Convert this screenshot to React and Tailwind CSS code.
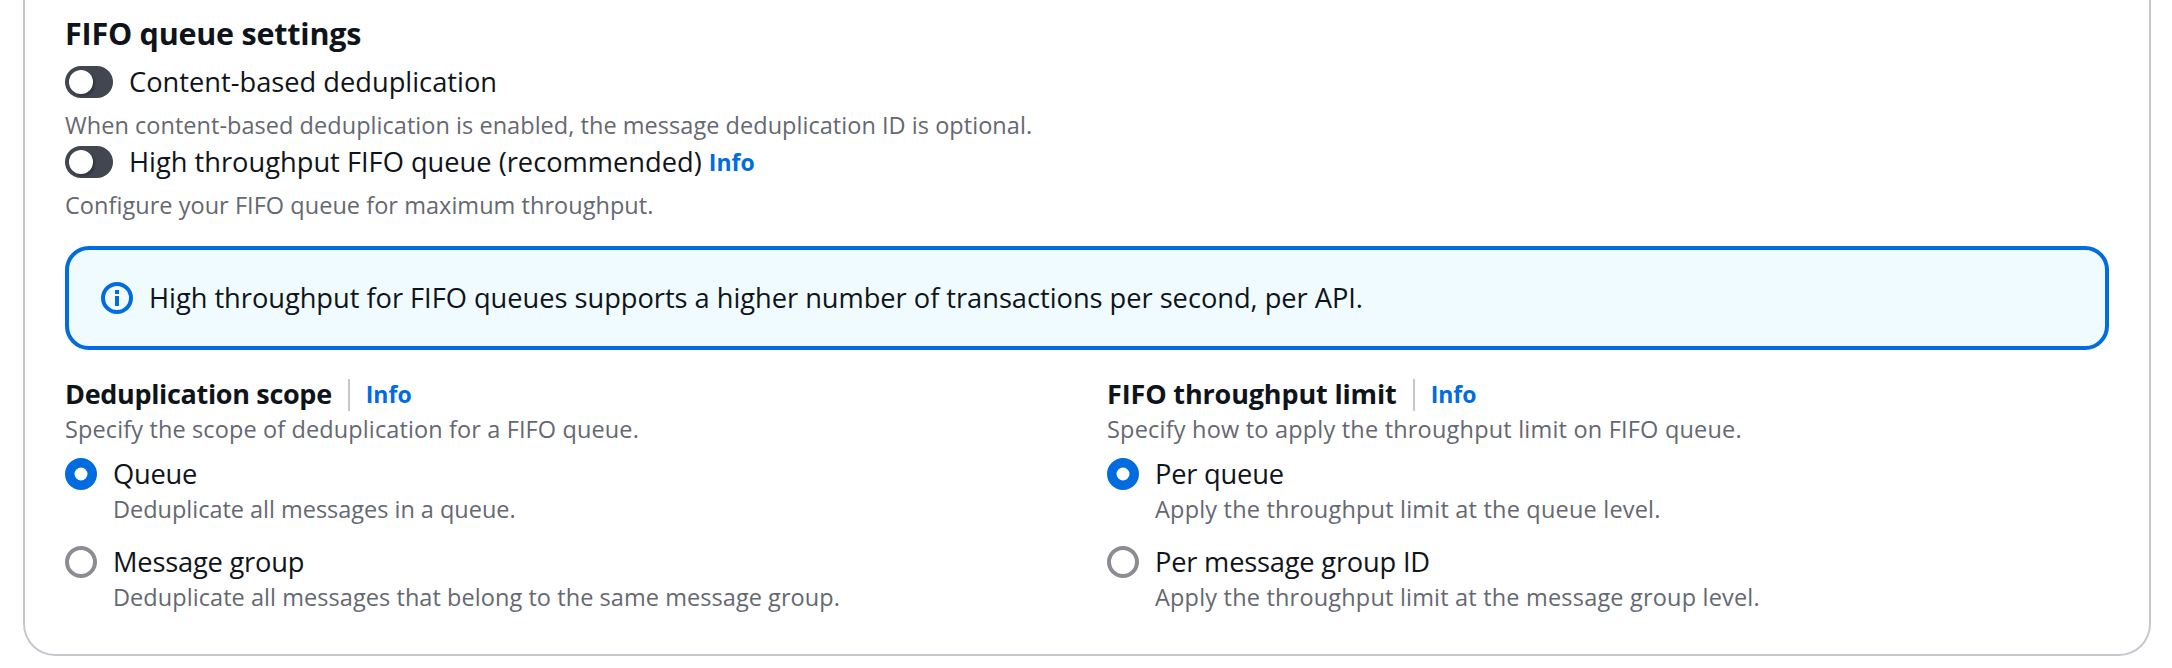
function InfoLink({ className = "" }) {
  return (
    <a href="#info" className={`text-[23px] font-bold text-[#006ce0] ${className}`}>
      Info
    </a>
  );
}

function Description({ className = "tracking-[0.05px]", children }) {
  return (
    <p className={`h-8 whitespace-nowrap text-[23.5px] leading-[30px] text-[#656871] ${className}`}>
      {children}
    </p>
  );
}

function Toggle({ description, info, children }) {
  return (
    <div>
      <div className="flex h-10 items-center">
        <span className="flex h-8 w-12 shrink-0 items-center rounded-full bg-[#424650] pl-1">
          <span className="size-6 rounded-full bg-white shadow-[2px_2px_2px_rgba(0,0,0,0.25)]" />
        </span>
        <span className="ml-4 whitespace-nowrap text-[27.25px] leading-10">{children}</span>
        {info && <InfoLink className="ml-[7px] leading-10" />}
      </div>
      <Description className="mt-2 tracking-[0.04px]">{description}</Description>
    </div>
  );
}

function RadioOption({ checked, label, description, descriptionClass }) {
  return (
    <div className="flex gap-4">
      <svg viewBox="0 0 32 32" className="mt-1 size-8 shrink-0">
        {checked ? (
          <circle cx="16" cy="16" r="11.25" fill="#fff" stroke="#006ce0" strokeWidth="9.5" />
        ) : (
          <circle cx="16" cy="16" r="14" fill="#fff" stroke="#8c8c94" strokeWidth="4" />
        )}
      </svg>
      <div>
        <div className="whitespace-nowrap text-[27.25px] leading-10 tracking-[-0.2px]">{label}</div>
        <Description className={descriptionClass}>{description}</Description>
      </div>
    </div>
  );
}

function RadioField({ title, titleClass, hint, hintClass, options }) {
  return (
    <div>
      <div className="flex h-10 items-center">
        <h3 className={`whitespace-nowrap text-[27px] font-bold leading-10 ${titleClass}`}>{title}</h3>
        <span className="ml-4 mt-0.5 h-8 w-0.5 bg-[#c6c6cd]" />
        <InfoLink className="ml-4 leading-10" />
      </div>
      <Description className={hintClass}>{hint}</Description>
      <div className="mt-2 flex flex-col gap-4">
        {options.map((option, index) => (
          <RadioOption key={option.label} checked={index === 0} {...option} />
        ))}
      </div>
    </div>
  );
}

function InfoIcon() {
  return (
    <svg viewBox="0 0 32 32" className="size-8 shrink-0" fill="#006ce0">
      <circle cx="16" cy="16" r="14" fill="none" stroke="#006ce0" strokeWidth="4" />
      <path d="M14 8h4v4h-4zM14 14h4v10h-4z" />
    </svg>
  );
}

export default function App() {
  return (
    <main className="h-[668px] overflow-hidden bg-white pl-[23px] pr-[21px] font-['Open_Sans',sans-serif] font-[430] text-[#0f141a]">
      <section className="h-[656px] rounded-b-[32px] border-2 border-t-0 border-[#c6c6cd] px-10 pt-3.5">
        <h2 className="h-12 whitespace-nowrap text-[30.5px] font-bold leading-[39px] tracking-[-0.23px]">FIFO queue settings</h2>
        <Toggle description="When content-based deduplication is enabled, the message deduplication ID is optional.">
          Content-based deduplication
        </Toggle>
        <Toggle description="Configure your FIFO queue for maximum throughput." info>
          High throughput FIFO queue (recommended)
        </Toggle>
        <div className="mt-6 flex h-26 items-center gap-4 rounded-3xl border-4 border-[#006ce0] bg-[#f0fbff] px-8">
          <InfoIcon />
          <span className="whitespace-nowrap text-[27.25px] leading-10 tracking-[-0.03px]">
            High throughput for FIFO queues supports a higher number of transactions per second, per API.
          </span>
        </div>
        <div className="mt-6 grid grid-cols-2 gap-10">
          <RadioField
            title="Deduplication scope"
            titleClass="tracking-[-0.33px]"
            hint="Specify the scope of deduplication for a FIFO queue."
            hintClass="tracking-[0.12px]"
            options={[
              {
                label: "Queue",
                description: "Deduplicate all messages in a queue.",
                descriptionClass: "tracking-[-0.02px]",
              },
              {
                label: "Message group",
                description: "Deduplicate all messages that belong to the same message group.",
                descriptionClass: "tracking-[0.06px]",
              },
            ]}
          />
          <RadioField
            title="FIFO throughput limit"
            titleClass="tracking-[-0.15px]"
            hint="Specify how to apply the throughput limit on FIFO queue."
            hintClass="tracking-[0.2px]"
            options={[
              {
                label: "Per queue",
                description: "Apply the throughput limit at the queue level.",
                descriptionClass: "tracking-[0.2px]",
              },
              {
                label: "Per message group ID",
                description: "Apply the throughput limit at the message group level.",
                descriptionClass: "tracking-[0.19px]",
              },
            ]}
          />
        </div>
      </section>
    </main>
  );
}
